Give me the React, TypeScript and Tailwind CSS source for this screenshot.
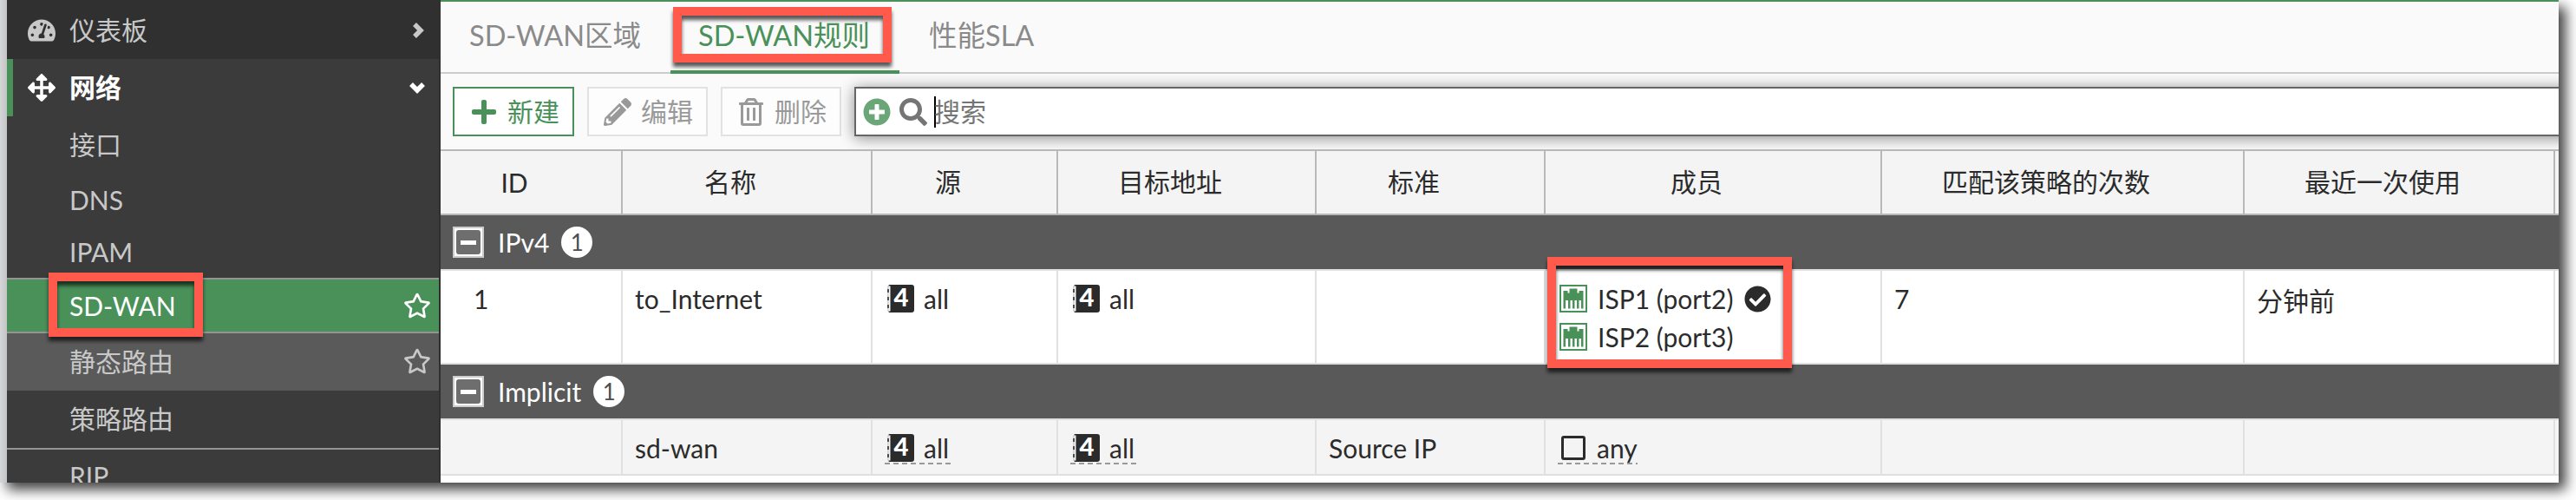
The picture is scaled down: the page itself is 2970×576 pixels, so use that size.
import type { ReactNode } from 'react';
import clsx from 'clsx';
import {
  FaArrowsAlt,
  FaCheckCircle,
  FaPencilAlt,
  FaPlus,
  FaPlusCircle,
  FaRegStar,
  FaRegTrashAlt,
  FaSearch,
  FaTachometerAlt,
} from 'react-icons/fa';

const columns = [
  { label: 'ID', width: 'w-[210px]' },
  { label: '名称', width: 'w-[288px]' },
  { label: '源', width: 'w-[214px]' },
  { label: '目标地址', width: 'w-[298px]' },
  { label: '标准', width: 'w-[264px]' },
  { label: '成员', width: 'w-[388px]' },
  { label: '匹配该策略的次数', width: 'w-[418px]' },
  { label: '最近一次使用', width: 'w-[358px]' },
];

const menuItems = [
  { label: '接口', className: 'h-[66px] pb-0.5 text-[#c8c8c8]' },
  { label: 'DNS', className: 'h-[60px] text-[#c8c8c8]' },
  { label: 'IPAM', className: 'h-[60px] text-[#c8c8c8]' },
  { label: 'SD-WAN', className: 'h-16 border-y-2 border-[#949494] bg-[#499159] text-white', star: true, marked: true },
  { label: '静态路由', className: 'h-[66px] bg-[#5a5a5a] pb-0.5 text-[#c8c8c8]', star: true },
  { label: '策略路由', className: 'h-[66px] pb-0.5 text-[#c8c8c8]' },
  { label: 'RIP', className: 'h-[62px] border-t-2 border-[#949494] text-[#c8c8c8]' },
];

function Highlight({ className }: { className: string }) {
  return (
    <div
      className={clsx(
        'pointer-events-none absolute z-10 border-10 border-[#ff5a4b] drop-shadow-[0_5px_2px_rgba(0,0,0,0.65)]',
        className
      )}
    />
  );
}

function Chevron({ className }: { className?: string }) {
  return (
    <svg viewBox="0 0 14 20" className={clsx('h-5 w-3.5', className)}>
      <path d="M3 3l7 7-7 7" fill="none" stroke="currentColor" strokeWidth="5.500" />
    </svg>
  );
}

function Address4Icon() {
  return (
    <svg viewBox="0 0 32 32" className="h-8 w-8 shrink-0 overflow-visible">
      <path d="M3 0h26q3 0 3 3v26q0 3-3 3H3l-1-1.500h2.500v-29H2z" fill="#2b2b2b" />
      <path d="M1 1.500h1.800v29H1z" fill="#d4d4d4" />
      <path d="M2 5v4M2 14v4M2 23v4" stroke="#2b2b2b" strokeWidth="1.600" />
      <text x="8.500" y="25" fill="#fff" fontFamily="Lato" fontWeight="900" fontSize="28" textLength="17" lengthAdjust="spacingAndGlyphs">
        4
      </text>
    </svg>
  );
}

function PortIcon() {
  return (
    <svg viewBox="0 0 32 32" className="h-8 w-8 shrink-0">
      <path d="M1 1h30v30H1z" fill="#fff" stroke="#499159" strokeWidth="2" />
      <path
        d="M4.500 7h5v2.500h2V4.500h9v5h2V7h5v20.500h-2.500V18h-2.500v9.500H20V18h-2.500v9.500H15V18h-2.500v9.500H10V18H7v9.500H4.500z"
        fill="#499159"
      />
    </svg>
  );
}

function Underlined({ children, className }: { children: ReactNode; className?: string }) {
  return (
    <div className={clsx('relative flex h-11 w-fit items-center', className)}>
      {children}
      <span className="absolute bottom-[3px] left-0 h-0.5 w-full bg-[repeating-linear-gradient(90deg,#999_0_6px,transparent_6px_10px)]" />
    </div>
  );
}

function Address() {
  return (
    <>
      <Address4Icon />
      <span className="ml-[11px]">all</span>
    </>
  );
}

function Member({ name, selected }: { name: string; selected?: boolean }) {
  return (
    <div className="flex h-11 items-center">
      <PortIcon />
      <span className="ml-3">{name}</span>
      {selected && <FaCheckCircle className="ml-[13px] size-[31px] text-[#2b2b2b]" />}
    </div>
  );
}

function GroupRow({ label }: { label: string }) {
  return (
    <div className="flex h-16 items-center border-b-2 border-[#e0e0e0] bg-[#595959] pl-3.5 text-white">
      <div className="flex size-9 items-center justify-center border-2 border-[#ccc] bg-white">
        <div className="flex size-7 items-center justify-center rounded-[3px] bg-[#6e6e6e]">
          <div className="h-[5px] w-[18px] bg-white" />
        </div>
      </div>
      <span className="ml-4">{label}</span>
      <span className="ml-[14px] flex size-9 items-center justify-center rounded-full bg-white text-[26px] text-[#4d4d4d]">1</span>
    </div>
  );
}

function Row({ cells, className }: { cells: ReactNode[]; className: string }) {
  return (
    <div className={clsx('flex border-b-2 border-[#e0e0e0]', className)}>
      {columns.map((column, i) => (
        <div
          key={column.label}
          className={clsx('shrink-0 border-r-2 border-[#e0e0e0] pt-2.5 leading-11', column.width, i === 0 ? 'pl-[38px]' : 'pl-3.5')}
        >
          {cells[i]}
        </div>
      ))}
    </div>
  );
}

function Sidebar() {
  return (
    <aside className="w-[500px] shrink-0 border-r-2 border-[#303030] bg-[#3b3b3b]">
      <div className="flex h-[68px] items-center bg-[#303030] pl-6 text-[#c8c8c8]">
        <FaTachometerAlt className="size-8 translate-y-px" />
        <span className="ml-4">仪表板</span>
        <Chevron className="mr-[17px] ml-auto translate-y-px" />
      </div>
      <div className="flex h-[66px] items-center border-l-[7px] border-[#499159] pl-[17px] font-bold text-white">
        <FaArrowsAlt className="size-8" />
        <span className="ml-4 pb-0.5">网络</span>
        <Chevron className="mr-[18px] ml-auto rotate-90" />
      </div>
      {menuItems.map((item) => (
        <div key={item.label} className={clsx('relative flex items-center pl-[72px]', item.className)}>
          <span>{item.label}</span>
          {item.star && <FaRegStar className="mr-[9px] ml-auto size-8" />}
          {item.marked && <Highlight className="-top-2 left-12 h-[74px] w-[178px]" />}
        </div>
      ))}
    </aside>
  );
}

function Tabs() {
  return (
    <div className="flex h-[85px] border-t-2 border-b-2 border-t-[#499159] border-b-[#ccc] text-[32.5px] leading-[78px] text-[#8a8a8a]">
      <div className="w-[265px] pl-[33px]">SD-WAN区域</div>
      <div className="relative -mb-0.5 w-[264px] border-b-4 border-[#499159] pl-8 text-[#499159]">
        SD-WAN规则
        <Highlight className="top-1.5 left-[3px] h-16 w-[252px]" />
      </div>
      <div className="pl-[34px]">性能SLA</div>
    </div>
  );
}

function Toolbar() {
  return (
    <div className="flex h-[87px] gap-[15px] pt-[15px] pl-3.5">
      <button className="flex h-[57px] w-[140px] shrink-0 items-center border-2 border-[#499159] bg-white pl-[18px] text-[#499159]">
        <FaPlus className="size-8" />
        <span className="ml-[11px]">新建</span>
      </button>
      <button className="flex h-[57px] w-[139px] shrink-0 items-center border-2 border-[#e2e2e2] bg-[#fdfdfd] pl-[17px] text-[#999]">
        <FaPencilAlt className="size-8" />
        <span className="ml-[11px]">编辑</span>
      </button>
      <button className="flex h-[57px] w-[139px] shrink-0 items-center border-2 border-[#e2e2e2] bg-[#fdfdfd] pl-[17px] text-[#999]">
        <FaRegTrashAlt className="size-8" />
        <span className="ml-[11px]">删除</span>
      </button>
      <div className="flex h-[57px] w-[1990px] shrink-0 items-center border-2 border-[#666] bg-white pl-2 text-[#757575] shadow-[0_2px_16px_rgba(0,0,0,0.45)]">
        <FaPlusCircle className="size-8 text-[#6aa677]" />
        <FaSearch className="ml-2.5 size-8" />
        <span className="ml-2 h-9 w-0.5 bg-black" />
        <span className="-ml-0.5">搜索</span>
      </div>
    </div>
  );
}

export default function App() {
  return (
    <div className="h-[576px] w-[2970px] overflow-hidden bg-white font-[Lato,'Noto_Sans_CJK_SC',sans-serif] text-[30px] whitespace-nowrap text-[#2b2b2b]">
      <div className="h-[556px] w-[2950px] shadow-[8px_8px_14px_rgba(0,0,0,0.75)]">
        <div className="flex h-full overflow-hidden bg-linear-to-r from-[#d4d6d8] to-[#c2c4c6] to-[8px] pl-2">
          <Sidebar />
          <main className="w-[2442px] shrink-0 overflow-hidden bg-[#fafafa]">
            <Tabs />
            <Toolbar />
            <div className="relative bg-white">
              <div className="flex h-[76px] border-y-2 border-[#b8b8b8] bg-[#f4f4f4]">
                {columns.map((column, i) => (
                  <div
                    key={column.label}
                    className={clsx(
                      'shrink-0 border-r-2 border-[#b8b8b8] pr-[38px] text-center',
                      i === 0 ? 'leading-[72px]' : 'leading-[70px]',
                      column.width
                    )}
                  >
                    {column.label}
                  </div>
                ))}
              </div>
              <GroupRow label="IPv4" />
              <Row
                className="h-[108px] bg-white"
                cells={[
                  '1',
                  'to_Internet',
                  <div className="ml-0.5 flex h-11 items-center"><Address /></div>,
                  <div className="ml-0.5 flex h-11 items-center"><Address /></div>,
                  null,
                  <div className="relative ml-0.5">
                    <Member name="ISP1 (port2)" selected />
                    <Member name="ISP2 (port3)" />
                    <Highlight className="-top-[26px] -left-3.5 h-32 w-[282px]" />
                  </div>,
                  '7',
                  <div className="pt-0.5">分钟前</div>,
                ]}
              />
              <GroupRow label="Implicit" />
              <Row
                className="h-16 bg-[#f4f4f4]"
                cells={[
                  null,
                  'sd-wan',
                  <Underlined className="pr-0.5 pl-0.5"><Address /></Underlined>,
                  <Underlined className="pr-0.5 pl-0.5"><Address /></Underlined>,
                  'Source IP',
                  <Underlined className="pl-1">
                    <span className="size-7 rounded-[3px] border-3 border-[#2b2b2b]" />
                    <span className="ml-[13px]">any</span>
                  </Underlined>,
                ]}
              />
              <div className="h-2" />
            </div>
          </main>
        </div>
      </div>
    </div>
  );
}
